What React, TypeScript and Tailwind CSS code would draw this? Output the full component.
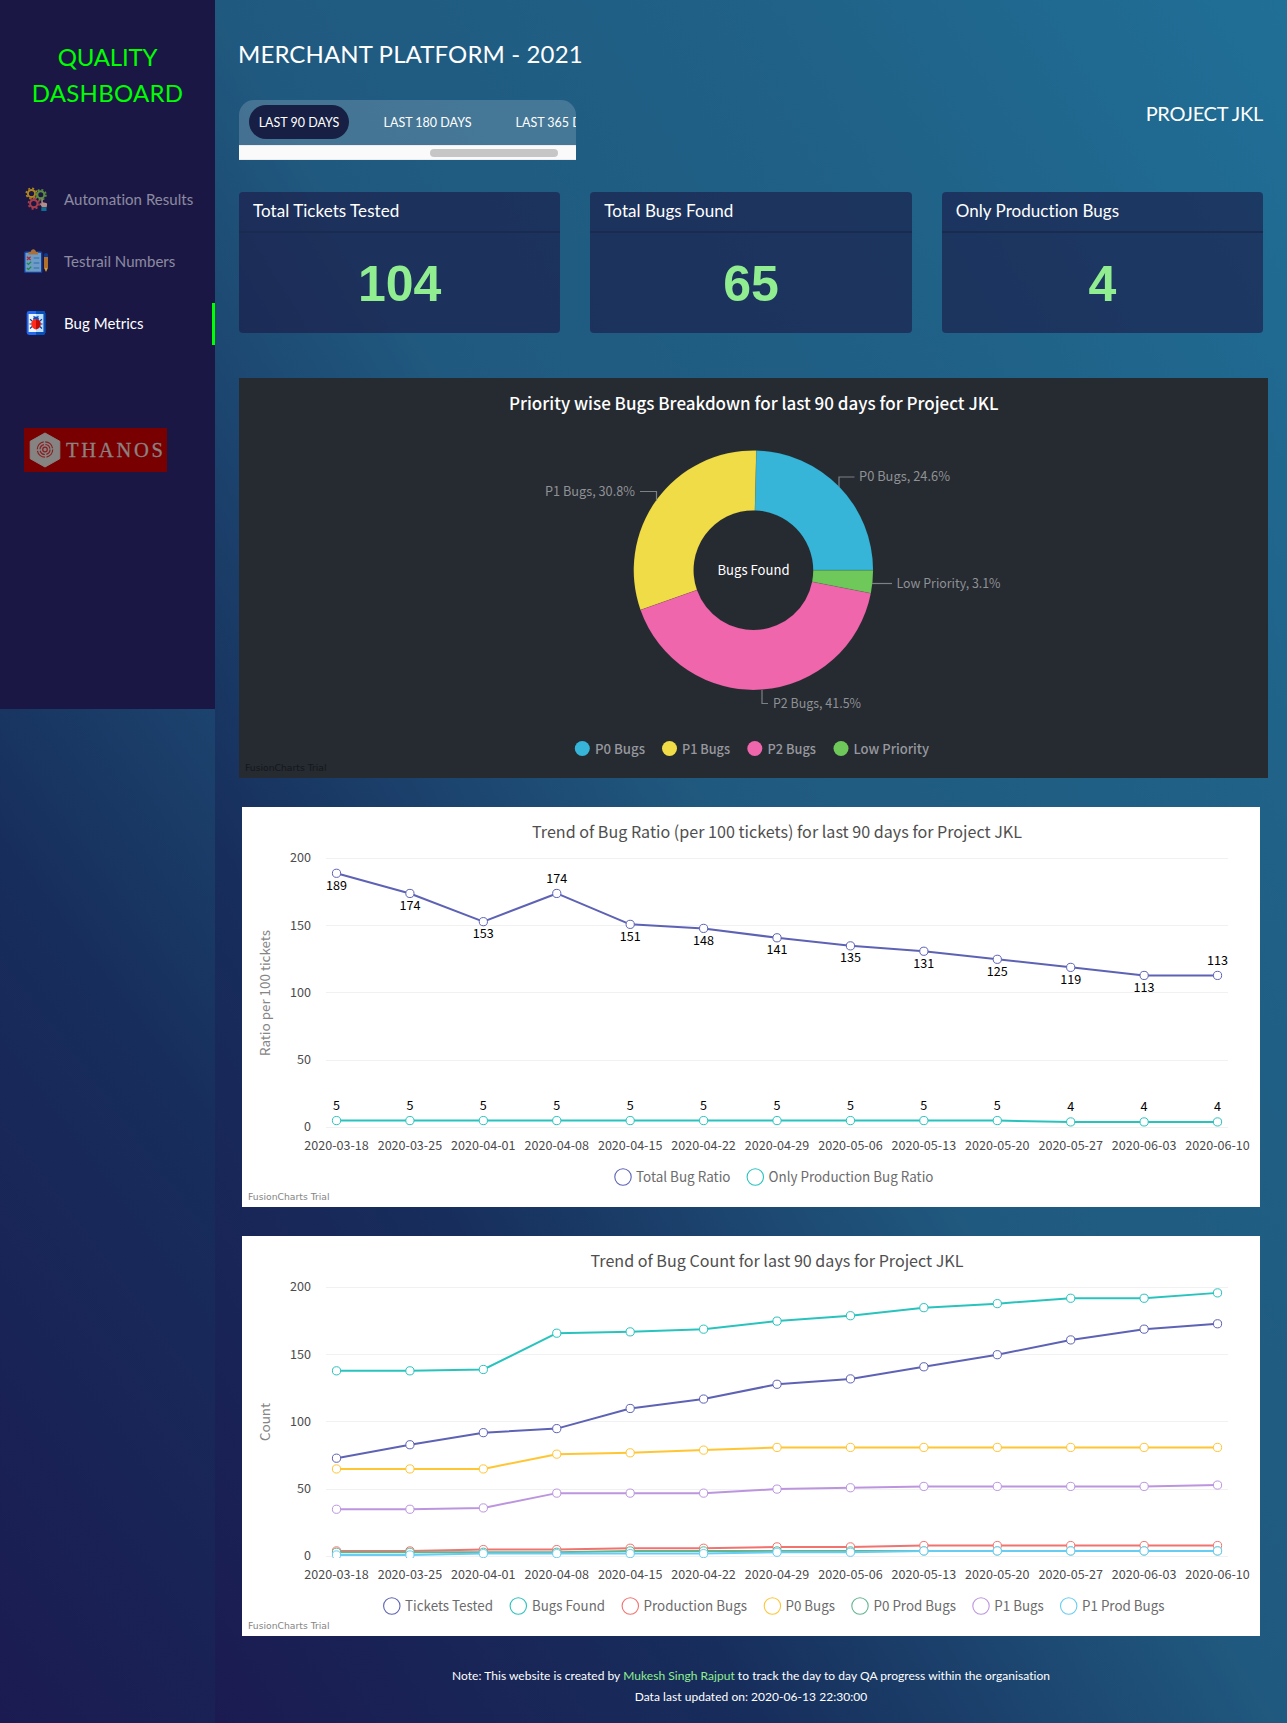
import React from "react";

const GRADIENT =
  "bg-[linear-gradient(to_top_right,#1b1b51_0%,#172d5b_25%,#20597f_50%,#206187_75%,#206f97_100%)]";

const DATES = [
  "2020-03-18", "2020-03-25", "2020-04-01", "2020-04-08", "2020-04-15",
  "2020-04-22", "2020-04-29", "2020-05-06", "2020-05-13", "2020-05-20",
  "2020-05-27", "2020-06-03", "2020-06-10",
];

type LabelProps = {
  x: number;
  y: number;
  w?: number;
  size: number;
  fill: string;
  weight?: number;
  anchor?: "start" | "middle" | "end";
  children: string;
};

function Label({ x, y, w, size, fill, weight = 400, anchor = "start", children }: LabelProps) {
  return (
    <text
      x={x}
      y={y}
      fontSize={size}
      fill={fill}
      fontWeight={weight}
      textAnchor={anchor}
      textLength={w}
      lengthAdjust="spacingAndGlyphs"
    >
      {children}
    </text>
  );
}

function Trial({ fill }: { fill: string }) {
  return (
    <text x={6} y={393} fontSize={9.2} fill={fill} textLength={81.5} lengthAdjust="spacingAndGlyphs" className="font-['DejaVu_Sans',sans-serif]">
      FusionCharts Trial
    </text>
  );
}

/* ---------- Sidebar icons ---------- */

function Gear({ cx, cy, r, color }: { cx: number; cy: number; r: number; color: string }) {
  return (
    <g stroke={color} fill="none">
      <circle cx={cx} cy={cy} r={r} strokeWidth={2} />
      <circle cx={cx} cy={cy} r={r + 1.6} strokeWidth={1.6} strokeDasharray={`${((r + 1.6) * Math.PI) / 8}`} />
    </g>
  );
}

function AutomationIcon() {
  return (
    <svg viewBox="0 0 24 24" className="size-6">
      <Gear cx={7.5} cy={6.5} r={3.6} color="#b08520" />
      <Gear cx={16.8} cy={7.8} r={3.5} color="#5d8a44" />
      <Gear cx={9.8} cy={16.6} r={3.7} color="#a83e4c" />
      <path d="M17.3 12.2c0-1 1.5-1 1.5 0v3l3.5.9c.6.2.8.6.8 1.2l-.4 3h-4.6l-2.3-3.4c.2-.9 1-.8 1.5-.2z" fill="#b58c87" />
      <path d="M17.3 20.3h5.2V24h-5.2z" fill="#0d6d94" />
    </svg>
  );
}

function TestrailIcon() {
  return (
    <svg viewBox="0 0 24 24" className="size-6">
      <rect x={0.7} y={3} width={17} height={20.5} rx={1.2} fill="#6f9cc4" stroke="#123f9c" strokeWidth={1.4} />
      <path d="M4.5 5.5V3h2.2C7 1.4 8 .3 9.3.3S11.7 1.4 12 3h2v2.5z" fill="#a8703a" />
      <g fill="none" strokeWidth={1.2}>
        <path d="M3 7.8l3.6 3.2M6.6 7.8L3 11" stroke="#a82a35" />
        <path d="M2.9 14l1.5 1.4 2.8-2.7M2.9 19l1.5 1.4 2.8-2.7" stroke="#1b8a45" strokeWidth={1.3} />
        <path d="M9.7 9h5.6M9.7 14h5.6M9.7 19h5.6" stroke="#2a6fb0" />
      </g>
      <path d="M20 7h4v12l-2 4-2-4z" fill="#b0702c" />
      <path d="M20 5.5a2 1.5 0 014 0V8h-4z" fill="#0c3a93" />
      <path d="M20.5 19h3l-1.5 3.5z" fill="#c9a548" />
    </svg>
  );
}

function BugIcon() {
  return (
    <svg viewBox="0 0 24 24" className="size-6">
      <rect x={2.7} y={0} width={18.6} height={24} rx={2.4} fill="#2268f0" />
      <path d="M12 0h6.9a2.4 2.4 0 012.4 2.4v19.2a2.4 2.4 0 01-2.4 2.4H12z" fill="#0550bd" />
      <path d="M4.6 3H12v18H4.6z" fill="#eaf5ff" />
      <path d="M12 3h7.4v18H12z" fill="#bfdfff" />
      <g stroke="#0b3f94" strokeWidth={1.1} fill="none">
        <path d="M8.2 10L6 8.2M7.5 13H5.5M8.2 15.5L6 17.5M15.8 10L18 8.2M16.5 13h2M15.8 15.5L18 17.5" />
        <path d="M10.5 6L9.6 5M13.5 6l.9-1" />
      </g>
      <path d="M9 8.8a3 3.3 0 016 0z" fill="#0c51c0" />
      <path d="M12 8.2c-3 0-4.8 2-4.8 4.6S9 18 12 18.5z" fill="#ff2a1c" />
      <path d="M12 8.2c3 0 4.8 2 4.8 4.6S15 18 12 18.5z" fill="#c40a06" />
    </svg>
  );
}

function ThanosLogo() {
  return (
    <svg viewBox="0 0 143 44" className="block h-11 w-[143px]">
      <rect width={143} height={44} fill="#790001" />
      <path d="M21 5l14.8 8.3v17.4L21 39 6.2 30.7V13.3z" fill="#868383" stroke="#868383" strokeLinejoin="round" />
      <g fill="none" stroke="#8b1d1f">
        <circle cx={21} cy={21.5} r={7.7} strokeWidth={1.2} strokeDasharray="10.5 1.6" />
        <circle cx={21} cy={21.5} r={5} strokeWidth={1.2} strokeDasharray="6.2 1.6" />
        <circle cx={21} cy={21.5} r={2.3} strokeWidth={1.2} />
      </g>
      <text x={42} y={28.5} fontSize={20.5} fill="#8b8282" stroke="#8b8282" strokeWidth={0.3} textLength={97} lengthAdjust="spacing" className="font-['Liberation_Serif',serif]">
        THANOS
      </text>
    </svg>
  );
}

function NavItem({ icon, label, active }: { icon: React.ReactNode; label: React.ReactNode; active?: boolean }) {
  return (
    <a className={`flex h-[42px] items-center border-r-[3px] pb-0.5 pl-6 text-[15px] ${active ? "border-[#00ff00] text-white" : "border-transparent text-white/50"}`}>
      {icon}
      <span className="ml-4 whitespace-nowrap tracking-[0.03px]">{label}</span>
    </a>
  );
}

/* ---------- Cards ---------- */

function StatCard({ title, value }: { title: string; value: string }) {
  return (
    <section className="h-[141px] rounded bg-[#1a1744]/60">
      <h3 className="h-[41px] border-b-2 border-[#192b4e] pl-[14px] text-[17px]/[38px] tracking-[0.05px] text-white">{title}</h3>
      <p className="pt-[21px] text-center font-['Liberation_Sans',sans-serif] text-[50px]/[60px] font-bold text-[#90ee90]">{value}</p>
    </section>
  );
}

/* ---------- Donut chart ---------- */

const CX = 514.4;
const CY = 192.2;

function slice(from: number, to: number) {
  const p = (r: number, a: number) =>
    `${(CX + r * Math.cos((a * Math.PI) / 180)).toFixed(2)} ${(CY - r * Math.sin((a * Math.PI) / 180)).toFixed(2)}`;
  const large = to - from > 180 ? 1 : 0;
  return `M${p(119.7, from)}A119.7 119.7 0 ${large} 0 ${p(119.7, to)}L${p(59.8, to)}A59.8 59.8 0 ${large} 1 ${p(59.8, from)}Z`;
}

const SLICES = [
  { count: 16, color: "#36b5d8" },
  { count: 20, color: "#f0dc46" },
  { count: 27, color: "#f066ac" },
  { count: 2, color: "#6ec85a" },
];

const PIE_LEGEND = [
  { cx: 343.3, x: 356, w: 50, name: "P0 Bugs", color: "#36b5d8" },
  { cx: 430.5, x: 443, w: 48, name: "P1 Bugs", color: "#f0dc46" },
  { cx: 515.8, x: 528.5, w: 48.5, name: "P2 Bugs", color: "#f066ac" },
  { cx: 602, x: 614.5, w: 75.5, name: "Low Priority", color: "#6ec85a" },
];

function DonutChart() {
  let sum = 0;
  return (
    <svg viewBox="0 0 1029 400" className="block h-[400px] w-[1029px] bg-[#262a31] font-['Noto_Sans_CJK_SC',sans-serif]">
      <Label x={270} y={31.5} w={489.5} size={17} weight={500} fill="#ffffff">Priority wise Bugs Breakdown for last 90 days for Project JKL</Label>
      {SLICES.map((s) => {
        const a = (sum / 65) * 360;
        sum += s.count;
        return <path key={s.color} d={slice(a, (sum / 65) * 360)} fill={s.color} stroke="#262a31" strokeOpacity={0.3} strokeWidth={0.3} />;
      })}
      <g fill="none" stroke="#7d8085" strokeWidth={1.2}>
        <path d="M401 113.500h16.500v9" />
        <path d="M600 109v-10h15.500" />
        <path d="M633 205.500h20" />
        <path d="M523 312v13.500h6" />
      </g>
      <Label x={306} y={118.3} w={90} size={13} fill="#8f9195">P1 Bugs, 30.8%</Label>
      <Label x={620} y={103.3} w={91} size={13} fill="#8f9195">P0 Bugs, 24.6%</Label>
      <Label x={657.5} y={210.3} w={104} size={13} fill="#8f9195">Low Priority, 3.1%</Label>
      <Label x={534} y={330.3} w={88} size={13} fill="#8f9195">P2 Bugs, 41.5%</Label>
      <Label x={478.5} y={196.5} w={72} size={13.5} fill="#ffffff">Bugs Found</Label>
      {PIE_LEGEND.map((l) => (
        <g key={l.name}>
          <circle cx={l.cx} cy={370.5} r={7.5} fill={l.color} />
          <Label x={l.x} y={375.6} w={l.w} size={13.5} weight={500} fill="#96989e">{l.name}</Label>
        </g>
      ))}
      <Trial fill="#14171b" />
    </svg>
  );
}

/* ---------- Line charts ---------- */

type Series = { name: string; color: string; data: number[] };
type Legend = { cx: number; x: number; w: number };

function LineChart({ title, titleX, titleW, axis, axisW, series, legend, labelPos }: {
  title: string; titleX: number; titleW: number; axis: string; axisW: number;
  series: Series[]; legend: Legend[]; labelPos?: ("above" | "below")[][];
}) {
  const px = (i: number) => 94.5 + i * 73.42;
  const py = (v: number) => 320.3 - v * 1.344;
  return (
    <svg viewBox="0 0 1018 400" className="block h-[400px] w-[1018px] bg-white font-['Noto_Sans_CJK_SC',sans-serif]">
      <defs>
        <clipPath id="plot">
          <rect x={80} y={40} width={910} height={282} />
        </clipPath>
      </defs>
      <Label x={titleX} y={31.4} w={titleW} size={16.5} fill="#4f4f4f">{title}</Label>
      {[200, 150, 100, 50, 0].map((v) => (
        <g key={v}>
          <path d={`M84 ${Math.floor(py(v)) + 0.5}H986`} stroke="#f1f1f1" />
          <Label x={69} y={py(v) + 3.8} w={v >= 100 ? 21 : v ? 14 : 7} size={12.5} fill="#4c4c4c" anchor="end">{String(v)}</Label>
        </g>
      ))}
      <text transform="translate(27.5 186) rotate(-90)" textAnchor="middle" fontSize={13} fill="#858585" textLength={axisW} lengthAdjust="spacingAndGlyphs">
        {axis}
      </text>
      {DATES.map((d, i) => (
        <Label key={d} x={px(i)} y={343} w={64.5} size={12.5} fill="#4c4c4c" anchor="middle">{d}</Label>
      ))}
      <g clipPath="url(#plot)">
        {series.map((s) => (
          <g key={s.name} stroke={s.color}>
            <polyline points={s.data.map((v, i) => `${px(i)},${py(v)}`).join(" ")} fill="none" strokeWidth={2} strokeLinejoin="round" />
            {s.data.map((v, i) => (
              <circle key={i} cx={px(i)} cy={py(v)} r={4.1} fill="#ffffff" strokeWidth={1} />
            ))}
          </g>
        ))}
      </g>
      {labelPos?.map((row, s) =>
        row.map((pos, i) => {
          const v = series[s].data[i];
          return (
            <Label key={`${s}-${i}`} x={px(i)} y={py(v) + (pos === "above" ? -10.5 : 16.5)} w={v > 99 ? 21 : 7} size={12.5} fill="#000000" anchor="middle">
              {String(v)}
            </Label>
          );
        })
      )}
      {legend.map((l, i) => (
        <g key={series[i].name}>
          <circle cx={l.cx} cy={370} r={8.2} fill="#ffffff" stroke={series[i].color} strokeWidth={1.1} />
          <Label x={l.x} y={374.8} w={l.w} size={14} fill="#6c6c6c">{series[i].name}</Label>
        </g>
      ))}
      <Trial fill="#858585" />
    </svg>
  );
}

const RATIO: Series[] = [
  { name: "Total Bug Ratio", color: "#5d62b5", data: [189, 174, 153, 174, 151, 148, 141, 135, 131, 125, 119, 113, 113] },
  { name: "Only Production Bug Ratio", color: "#29c3be", data: [5, 5, 5, 5, 5, 5, 5, 5, 5, 5, 4, 4, 4] },
];

const COUNT: Series[] = [
  { name: "Tickets Tested", color: "#5d62b5", data: [73, 83, 92, 95, 110, 117, 128, 132, 141, 150, 161, 169, 173] },
  { name: "Bugs Found", color: "#29c3be", data: [138, 138, 139, 166, 167, 169, 175, 179, 185, 188, 192, 192, 196] },
  { name: "Production Bugs", color: "#f2726f", data: [4, 4, 5, 5, 6, 6, 7, 7, 8, 8, 8, 8, 8] },
  { name: "P0 Bugs", color: "#ffc533", data: [65, 65, 65, 76, 77, 79, 81, 81, 81, 81, 81, 81, 81] },
  { name: "P0 Prod Bugs", color: "#62b58f", data: [3, 3, 3, 3, 4, 4, 4, 4, 4, 4, 4, 4, 4] },
  { name: "P1 Bugs", color: "#bc95df", data: [35, 35, 36, 47, 47, 47, 50, 51, 52, 52, 52, 52, 53] },
  { name: "P1 Prod Bugs", color: "#67cdf2", data: [1, 1, 2, 2, 2, 2, 3, 3, 4, 4, 4, 4, 4] },
];

const RATIO_POS: ("above" | "below")[][] = [
  RATIO[0].data.map((_, i) => (i === 3 || i === 12 ? "above" : "below")),
  RATIO[1].data.map(() => "above"),
];

export default function App() {
  return (
    <div className={`flex h-[1723px] w-[1287px] overflow-hidden font-[Lato,sans-serif] ${GRADIENT}`}>
      <aside className="h-[709px] w-[215px] shrink-0 bg-[#1a1744]">
        <h1 className="pt-[39px] text-center text-[24px]/[36px] text-[#00ff00]">
          <span className="tracking-[-0.2px]">QUALITY</span>
          <br />
          <span className="tracking-[0.25px]">DASHBOARD</span>
        </h1>
        <nav className="mt-[68px] flex flex-col gap-5">
          <NavItem icon={<AutomationIcon />} label="Automation Results" />
          <NavItem icon={<TestrailIcon />} label="Testrail Numbers" />
          <NavItem icon={<BugIcon />} label="Bug Metrics" active />
        </nav>
        <div className="mt-[83px] ml-6">
          <ThanosLogo />
        </div>
      </aside>

      <main className={`h-full flex-1 pt-[35px] pl-6 ${GRADIENT}`}>
        <h2 className="-ml-px h-[65px] pt-px text-[24px]/[36px] tracking-[0.12px] text-white">MERCHANT PLATFORM - 2021</h2>
        <div className="flex h-[92px] w-[1024px] items-start justify-between">
          <div className="w-[337px] overflow-hidden rounded-t-[15px]">
            <div className="flex h-[45px] gap-[25px] bg-white/17 pt-[5px] pl-[10px] text-[12.5px]/[35px] whitespace-nowrap text-white">
              <span className="h-[34px] w-[100px] shrink-0 rounded-full bg-[#181f44] text-center">LAST 90 DAYS</span>
              <span className="w-[107px] shrink-0 text-center">LAST 180 DAYS</span>
              <span className="w-[107px] shrink-0 text-center">LAST 365 DAYS</span>
            </div>
            <div className="h-[15px] border-y border-[#ececec] bg-[#fafafa] pt-[3px] pl-[191px]">
              <div className="h-2 w-32 rounded-full bg-[#c6c6c6]" />
            </div>
          </div>
          <div className="-mt-[2px] text-[20px]/[30px] tracking-[-0.28px] text-white">PROJECT JKL</div>
        </div>

        <div className="grid w-[1024px] grid-cols-3 gap-[30px]">
          <StatCard title="Total Tickets Tested" value="104" />
          <StatCard title="Total Bugs Found" value="65" />
          <StatCard title="Only Production Bugs" value="4" />
        </div>

        <div className="mt-[45px]">
          <DonutChart />
        </div>
        <div className="mt-[29px] flex flex-col gap-[29px] pl-[3px]">
          <LineChart
            title="Trend of Bug Ratio (per 100 tickets) for last 90 days for Project JKL"
            titleX={290} titleW={490} axis="Ratio per 100 tickets" axisW={126}
            series={RATIO} labelPos={RATIO_POS}
            legend={[{ cx: 381, x: 394, w: 94.5 }, { cx: 513.3, x: 526.5, w: 165 }]}
          />
          <LineChart
            title="Trend of Bug Count for last 90 days for Project JKL"
            titleX={348.5} titleW={373} axis="Count" axisW={38}
            series={COUNT}
            legend={[
              { cx: 149.8, x: 163, w: 88 },
              { cx: 276.3, x: 290, w: 73 },
              { cx: 388.3, x: 401.5, w: 103.5 },
              { cx: 530.4, x: 543.5, w: 49.5 },
              { cx: 618, x: 631.5, w: 82.5 },
              { cx: 739, x: 752.3, w: 49.5 },
              { cx: 826.7, x: 840, w: 82.5 },
            ]}
          />
        </div>

        <footer className="mt-[29px] w-[1024px] text-center text-[12px]/[21px] tracking-[0.04px] text-white">
          <p>
            Note: This website is created by <a className="text-[#90ee90]">Mukesh Singh Rajput</a> to track the day to day QA progress within the organisation
          </p>
          <p>Data last updated on: 2020-06-13 22:30:00</p>
        </footer>
      </main>
    </div>
  );
}
